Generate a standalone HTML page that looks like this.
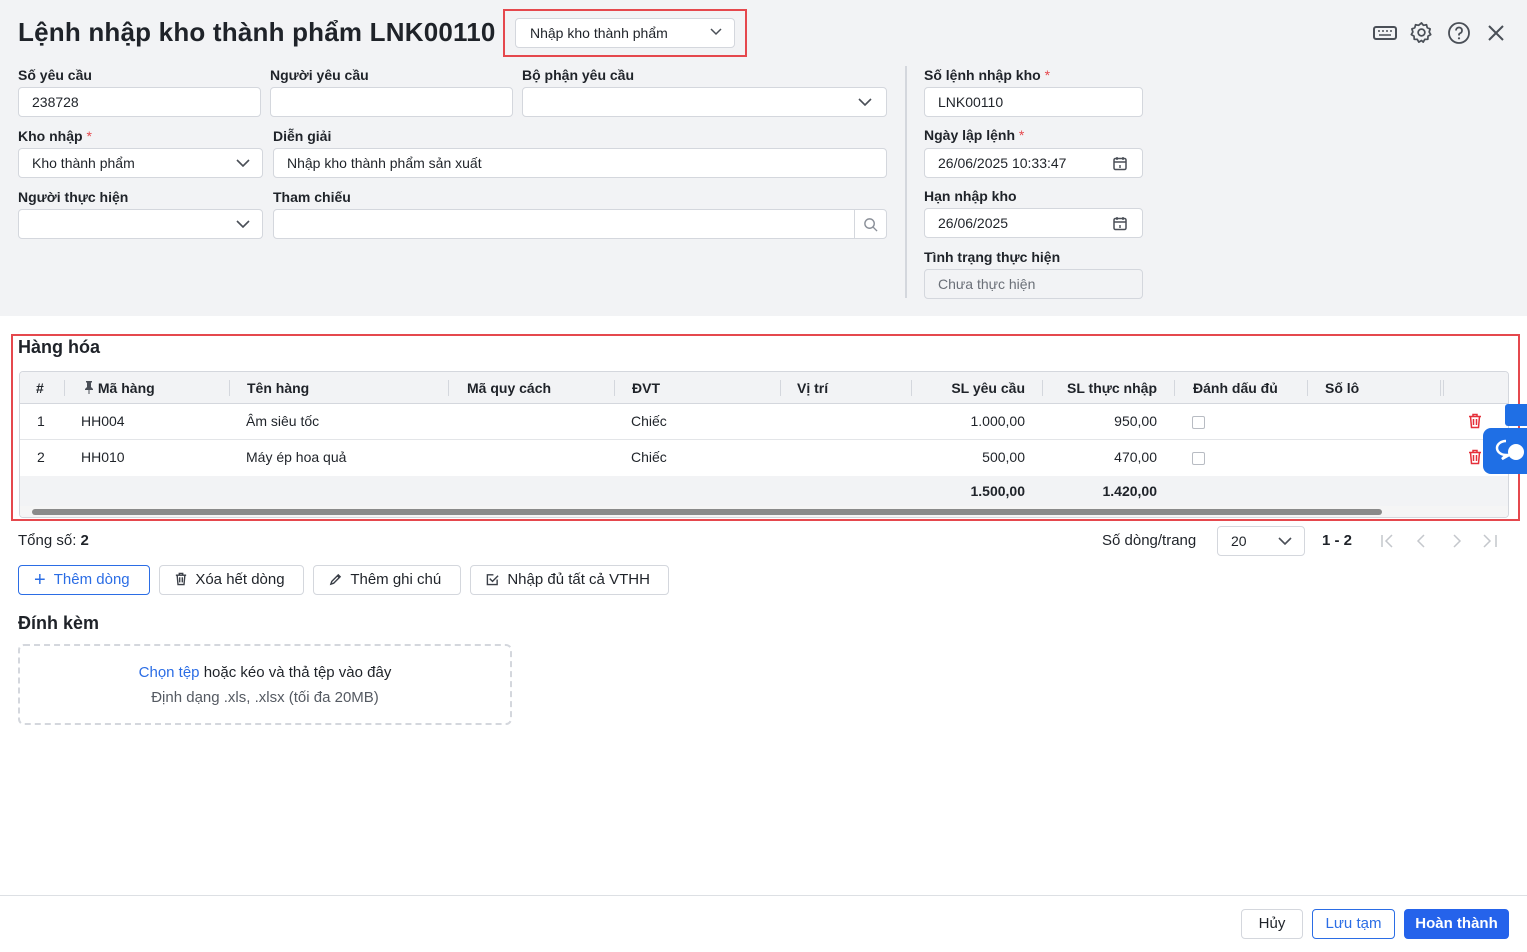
<!DOCTYPE html>
<html><head><meta charset="utf-8"><style>
*{box-sizing:border-box;margin:0;padding:0}
body{width:1527px;height:952px;position:relative;background:#fff;font-family:"Liberation Sans",sans-serif;color:#1f2329;font-size:14px;overflow:hidden}
.a{position:absolute}
.lbl{position:absolute;font-size:14px;font-weight:bold;color:#1f2329}
.req{color:#e5484d;font-weight:normal}
.in{position:absolute;height:30px;background:#fff;border:1px solid #d4d7dd;border-radius:4px;font-size:14px;padding-left:13px;line-height:28px;color:#1f2329}
.chev{position:absolute;right:12px;top:8px}
.th{position:absolute;top:0;height:32px;line-height:32px;font-weight:bold;font-size:14px}
.sep{position:absolute;top:8px;width:1px;height:16px;background:#d4d7dd}
.td{position:absolute;font-size:14px}
.btn{position:absolute;height:30px;border:1px solid #d4d7dd;border-radius:4px;background:#fff;font-size:15px;line-height:28px;padding-left:15px}
.pg{position:absolute;top:533px}
</style></head><body>
<div class="a" style="left:0;top:0;width:1527px;height:316px;background:#f2f3f5"></div>
<div class="a" style="left:18px;top:17px;font-size:26px;font-weight:bold;color:#1f2329;letter-spacing:0.2px">Lệnh nhập kho thành phẩm LNK00110</div>
<div class="a" style="left:503px;top:9px;width:244px;height:48px;border:2px solid #e5484d"></div>
<div class="in" style="left:515px;top:18px;width:220px;height:30px;padding-left:14px">Nhập kho thành phẩm<svg class="chev" style="top:9px" width="12" height="8" viewBox="0 0 12 8"><path d="M1 1l5 5 5-5" fill="none" stroke="#4a4f57" stroke-width="1.5"/></svg></div>
<svg class="a" style="left:1373px;top:24px" width="24" height="18" viewBox="0 0 24 18"><rect x="1" y="3" width="22" height="12" rx="2" fill="none" stroke="#4a4f57" stroke-width="2"/><path d="M5 7h2M9 7h2M13 7h2M17 7h2M6 11h12" stroke="#4a4f57" stroke-width="1.5"/></svg>
<svg class="a" style="left:1410px;top:21px" width="23" height="23" viewBox="0 0 24 24"><path d="M12 2l2 2.5 3.2-.6.8 3.1 3 1.3-1 3.1 1.6 2.8-2.8 1.6-.2 3.2-3.2.2-1.6 2.8L12 20.3 9.2 22l-1.6-2.8-3.2-.2-.2-3.2L1.4 14.2 3 11.4 2 8.3l3-1.3.8-3.1 3.2.6z" fill="none" stroke="#4a4f57" stroke-width="1.8" stroke-linejoin="round"/><circle cx="12" cy="12" r="3.5" fill="none" stroke="#4a4f57" stroke-width="1.8"/></svg>
<svg class="a" style="left:1447px;top:21px" width="24" height="24" viewBox="0 0 24 24"><circle cx="12" cy="12" r="10" fill="none" stroke="#4a4f57" stroke-width="1.8"/><path d="M9 9.5a3 3 0 1 1 4 2.8c-.8.3-1 1-1 1.7v.5" fill="none" stroke="#4a4f57" stroke-width="1.8"/><circle cx="12" cy="17.3" r="1.1" fill="#4a4f57"/></svg>
<svg class="a" style="left:1487px;top:24px" width="18" height="18" viewBox="0 0 18 18"><path d="M2 2l14 14M16 2L2 16" stroke="#4a4f57" stroke-width="2"/></svg>

<div class="lbl" style="left:18px;top:67px">Số yêu cầu</div>
<div class="lbl" style="left:270px;top:67px">Người yêu cầu</div>
<div class="lbl" style="left:522px;top:67px">Bộ phận yêu cầu</div>
<div class="in" style="left:18px;top:87px;width:243px">238728</div>
<div class="in" style="left:270px;top:87px;width:243px"></div>
<div class="in" style="left:522px;top:87px;width:365px"><svg class="chev" style="top:10px;right:14px" width="14" height="8" viewBox="0 0 14 8"><path d="M1 1l6 6 6-6" fill="none" stroke="#4a4f57" stroke-width="1.6"/></svg></div>

<div class="lbl" style="left:18px;top:128px">Kho nhập <span class="req">*</span></div>
<div class="lbl" style="left:273px;top:128px">Diễn giải</div>
<div class="in" style="left:18px;top:148px;width:245px">Kho thành phẩm<svg class="chev" style="top:10px;right:12px" width="14" height="8" viewBox="0 0 14 8"><path d="M1 1l6 6 6-6" fill="none" stroke="#4a4f57" stroke-width="1.6"/></svg></div>
<div class="in" style="left:273px;top:148px;width:614px">Nhập kho thành phẩm sản xuất</div>

<div class="lbl" style="left:18px;top:189px">Người thực hiện</div>
<div class="lbl" style="left:273px;top:189px">Tham chiếu</div>
<div class="in" style="left:18px;top:209px;width:245px"><svg class="chev" style="top:10px;right:12px" width="14" height="8" viewBox="0 0 14 8"><path d="M1 1l6 6 6-6" fill="none" stroke="#4a4f57" stroke-width="1.6"/></svg></div>
<div class="in" style="left:273px;top:209px;width:614px"><div class="a" style="right:31px;top:0;width:1px;height:28px;background:#d4d7dd"></div><svg class="a" style="right:8px;top:7px" width="15" height="15" viewBox="0 0 16 16"><circle cx="7" cy="7" r="5" fill="none" stroke="#8a8f98" stroke-width="1.5"/><path d="M11 11l4 4" stroke="#8a8f98" stroke-width="1.5"/></svg></div>

<div class="a" style="left:905px;top:66px;width:2px;height:232px;background:#d4d7dd"></div>
<div class="lbl" style="left:924px;top:67px">Số lệnh nhập kho <span class="req">*</span></div>
<div class="in" style="left:924px;top:87px;width:219px">LNK00110</div>
<div class="lbl" style="left:924px;top:127px">Ngày lập lệnh <span class="req">*</span></div>
<div class="in" style="left:924px;top:148px;width:219px">26/06/2025 10:33:47<svg class="a" style="right:15px;top:7px" width="14" height="15" viewBox="0 0 14 15"><rect x="1" y="2.5" width="12" height="11" rx="1.5" fill="none" stroke="#4a4f57" stroke-width="1.5"/><path d="M1 6h12M4 1v3M10 1v3M7 9v3" stroke="#4a4f57" stroke-width="1.4"/></svg></div>
<div class="lbl" style="left:924px;top:188px">Hạn nhập kho</div>
<div class="in" style="left:924px;top:208px;width:219px">26/06/2025<svg class="a" style="right:15px;top:7px" width="14" height="15" viewBox="0 0 14 15"><rect x="1" y="2.5" width="12" height="11" rx="1.5" fill="none" stroke="#4a4f57" stroke-width="1.5"/><path d="M1 6h12M4 1v3M10 1v3M7 9v3" stroke="#4a4f57" stroke-width="1.4"/></svg></div>
<div class="lbl" style="left:924px;top:249px">Tình trạng thực hiện</div>
<div class="in" style="left:924px;top:269px;width:219px;background:#f2f3f5;color:#6b7078">Chưa thực hiện</div>

<div class="a" style="left:11px;top:334px;width:1509px;height:187px;border:2px solid #e5484d"></div>
<div class="a" style="left:18px;top:337px;font-size:18px;font-weight:bold">Hàng hóa</div>
<div class="a" style="left:19px;top:371px;width:1490px;height:147px;border:1px solid #d4d7dd;border-radius:4px;overflow:hidden;background:#fff">
 <div class="a" style="left:0;top:0;width:1490px;height:32px;background:#f2f3f5;border-bottom:1px solid #d4d7dd">
  <div class="th" style="left:16px">#</div><div class="sep" style="left:44px"></div>
  <div class="th" style="left:64px"><svg width="10" height="13" viewBox="0 0 10 13" style="vertical-align:-1px"><path d="M2 0h6v1l-1 1v4l2 2v1H1V8l2-2V2L2 1zM4.5 9h1v4h-1z" fill="#4a4f57"/></svg> Mã hàng</div><div class="sep" style="left:209px"></div>
  <div class="th" style="left:227px">Tên hàng</div><div class="sep" style="left:428px"></div>
  <div class="th" style="left:447px">Mã quy cách</div><div class="sep" style="left:594px"></div>
  <div class="th" style="left:612px">ĐVT</div><div class="sep" style="left:760px"></div>
  <div class="th" style="left:777px">Vị trí</div><div class="sep" style="left:891px"></div>
  <div class="th" style="right:485px">SL yêu cầu</div><div class="sep" style="left:1022px"></div>
  <div class="th" style="right:353px">SL thực nhập</div><div class="sep" style="left:1154px"></div>
  <div class="th" style="left:1173px">Đánh dấu đủ</div><div class="sep" style="left:1287px"></div>
  <div class="th" style="left:1305px">Số lô</div><div class="sep" style="left:1420px"></div><div class="sep" style="left:1423px"></div>
 </div>
 <div class="a" style="left:0;top:32px;width:1490px;height:36px;border-bottom:1px solid #e3e5e8">
  <div class="td" style="left:17px;top:9px">1</div><div class="td" style="left:61px;top:9px">HH004</div><div class="td" style="left:226px;top:9px">Âm siêu tốc</div><div class="td" style="left:611px;top:9px">Chiếc</div>
  <div class="td" style="right:485px;top:9px">1.000,00</div><div class="td" style="right:353px;top:9px">950,00</div>
  <div class="a" style="left:1172px;top:12px;width:13px;height:13px;border:1px solid #b8bcc3;border-radius:2px"></div>
  <svg class="a" style="left:1448px;top:9px" width="14" height="16" viewBox="0 0 14 16"><path d="M1 3.5h12M5 3.5V1.5h4v2M2.5 3.5l1 11h7l1-11M5.5 6v6M8.5 6v6" fill="none" stroke="#e5303a" stroke-width="1.5"/></svg>
 </div>
 <div class="a" style="left:0;top:68px;width:1490px;height:36px">
  <div class="td" style="left:17px;top:9px">2</div><div class="td" style="left:61px;top:9px">HH010</div><div class="td" style="left:226px;top:9px">Máy ép hoa quả</div><div class="td" style="left:611px;top:9px">Chiếc</div>
  <div class="td" style="right:485px;top:9px">500,00</div><div class="td" style="right:353px;top:9px">470,00</div>
  <div class="a" style="left:1172px;top:12px;width:13px;height:13px;border:1px solid #b8bcc3;border-radius:2px"></div>
  <svg class="a" style="left:1448px;top:9px" width="14" height="16" viewBox="0 0 14 16"><path d="M1 3.5h12M5 3.5V1.5h4v2M2.5 3.5l1 11h7l1-11M5.5 6v6M8.5 6v6" fill="none" stroke="#e5303a" stroke-width="1.5"/></svg>
 </div>
 <div class="a" style="left:0;top:104px;width:1490px;height:30px;background:#f2f3f5">
  <div class="td" style="right:485px;top:7px;font-weight:bold">1.500,00</div><div class="td" style="right:353px;top:7px;font-weight:bold">1.420,00</div>
 </div>
 <div class="a" style="left:0;top:134px;width:1490px;height:13px;background:#f5f5f5"></div>
 <div class="a" style="left:12px;top:137px;width:1350px;height:6px;background:#8a8a8a;border-radius:3px"></div>
</div>
<div class="a" style="left:1505px;top:404px;width:22px;height:22px;background:#1f6fe5;border-radius:3px 0 0 3px"></div>
<div class="a" style="left:1483px;top:428px;width:44px;height:46px;background:#1f6fe5;border-radius:8px 0 0 8px"></div>
<svg class="a" style="left:1494px;top:438px" width="33" height="26" viewBox="0 0 33 26"><path d="M12 3a9 7 0 1 0 0 14l-4 4 7-4" fill="none" stroke="#fff" stroke-width="2.5"/><circle cx="22" cy="14" r="8" fill="#fff"/></svg>

<div class="a" style="left:18px;top:532px;font-size:15px">Tổng số: <b>2</b></div>
<div class="a" style="left:1102px;top:532px;font-size:15px">Số dòng/trang</div>
<div class="in" style="left:1217px;top:526px;width:88px">20<svg class="chev" style="top:10px" width="14" height="8" viewBox="0 0 14 8"><path d="M1 1l6 6 6-6" fill="none" stroke="#4a4f57" stroke-width="1.6"/></svg></div>
<div class="a" style="left:1322px;top:532px;font-weight:bold;font-size:15px">1 - 2</div>
<svg class="a" style="left:1380px;top:533px" width="120" height="16" viewBox="0 0 120 16"><g fill="none" stroke="#c4c7cc" stroke-width="1.5"><path d="M2 2v12M12 2L6 8l6 6"/><path d="M44 2l-6 6 6 6"/><path d="M74 2l6 6-6 6"/><path d="M104 2l6 6-6 6M116 2v12"/></g></svg>

<div class="btn" style="left:18px;top:565px;width:132px;border-color:#2b6de5;color:#2b6de5"><span style="font-size:20px;vertical-align:-2px">+</span>&nbsp; Thêm dòng</div>
<div class="btn" style="left:159px;top:565px;width:145px"><svg width="12" height="14" viewBox="0 0 14 16" style="vertical-align:-2px"><path d="M1 3.5h12M5 3.5V1.5h4v2M2.5 3.5l1 11h7l1-11M5.5 6v6M8.5 6v6" fill="none" stroke="#3a3f47" stroke-width="1.6"/></svg>&nbsp;&nbsp;Xóa hết dòng</div>
<div class="btn" style="left:313px;top:565px;width:148px"><svg width="13" height="13" viewBox="0 0 14 14" style="vertical-align:-2px"><path d="M2 12l1-3 7-7 2 2-7 7zM9 3l2 2" fill="none" stroke="#3a3f47" stroke-width="1.5"/></svg>&nbsp;&nbsp;Thêm ghi chú</div>
<div class="btn" style="left:470px;top:565px;width:199px"><svg width="13" height="13" viewBox="0 0 14 14" style="vertical-align:-2px"><path d="M12 7v5.5H1.5V2H8" fill="none" stroke="#3a3f47" stroke-width="1.5"/><path d="M4 6l3 3 6-6" fill="none" stroke="#3a3f47" stroke-width="1.5"/></svg>&nbsp;&nbsp;Nhập đủ tất cả VTHH</div>

<div class="a" style="left:18px;top:613px;font-size:18px;font-weight:bold">Đính kèm</div>
<div class="a" style="left:18px;top:644px;width:494px;height:81px;border:2px dashed #d4d7dd;border-radius:6px;text-align:center;font-size:15px">
 <div style="margin-top:18px"><span style="color:#2b6de5">Chọn tệp</span> hoặc kéo và thả tệp vào đây</div>
 <div style="margin-top:8px;color:#555a62">Định dạng .xls, .xlsx (tối đa 20MB)</div>
</div>

<div class="a" style="left:0;top:895px;width:1527px;height:1px;background:#dde0e4"></div>
<div class="btn" style="left:1241px;top:909px;width:62px;padding:0;text-align:center">Hủy</div>
<div class="btn" style="left:1312px;top:909px;width:83px;padding:0;text-align:center;border-color:#2b6de5;color:#2b6de5">Lưu tạm</div>
<div class="btn" style="left:1404px;top:909px;width:105px;padding:0;text-align:center;background:#2563eb;border-color:#2563eb;color:#fff;font-weight:bold">Hoàn thành</div>
</body></html>
